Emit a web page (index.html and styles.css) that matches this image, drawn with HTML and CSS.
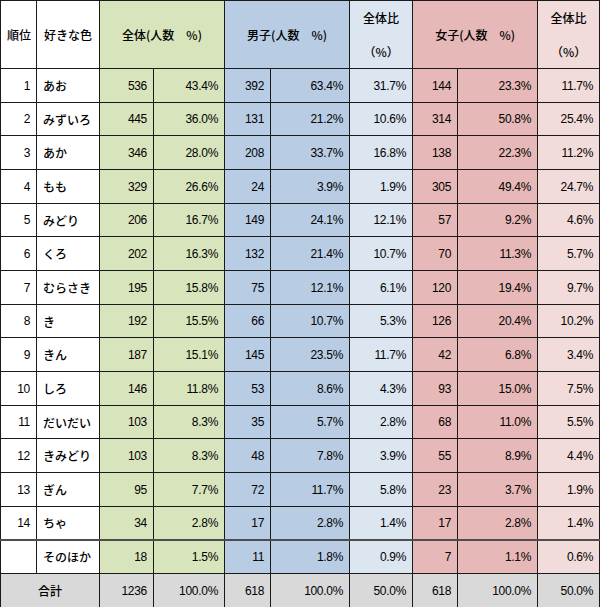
FILE: index.html
```html
<!DOCTYPE html>
<html lang="ja">
<head>
<meta charset="utf-8">
<title>好きな色</title>
<link rel="stylesheet" href="styles.css">
</head>
<body>
<table class="tbl">
  <colgroup>
    <col class="c-rank"><col class="c-name">
    <col class="c-n1"><col class="c-p1">
    <col class="c-n2"><col class="c-p2"><col class="c-r2">
    <col class="c-n3"><col class="c-p3"><col class="c-r3">
  </colgroup>
  <thead>
    <tr class="head">
      <th class="w">順位</th>
      <th class="w">好きな色</th>
      <th class="g" colspan="2">全体(人数　%)</th>
      <th class="b" colspan="2">男子(人数　%)</th>
      <th class="lb"><span class="l1">全体比</span><span class="l2">（%）</span></th>
      <th class="p" colspan="2">女子(人数　%)</th>
      <th class="lp"><span class="l1">全体比</span><span class="l2">（%）</span></th>
    </tr>
  </thead>
  <tbody>
    <tr class="r34"><td class="w num">1</td><td class="w name">あお</td><td class="g num">536</td><td class="g num">43.4%</td><td class="b num">392</td><td class="b num">63.4%</td><td class="lb num">31.7%</td><td class="p num">144</td><td class="p num">23.3%</td><td class="lp num">11.7%</td></tr>
    <tr class="r33"><td class="w num">2</td><td class="w name">みずいろ</td><td class="g num">445</td><td class="g num">36.0%</td><td class="b num">131</td><td class="b num">21.2%</td><td class="lb num">10.6%</td><td class="p num">314</td><td class="p num">50.8%</td><td class="lp num">25.4%</td></tr>
    <tr class="r34"><td class="w num">3</td><td class="w name">あか</td><td class="g num">346</td><td class="g num">28.0%</td><td class="b num">208</td><td class="b num">33.7%</td><td class="lb num">16.8%</td><td class="p num">138</td><td class="p num">22.3%</td><td class="lp num">11.2%</td></tr>
    <tr class="r34"><td class="w num">4</td><td class="w name">もも</td><td class="g num">329</td><td class="g num">26.6%</td><td class="b num">24</td><td class="b num">3.9%</td><td class="lb num">1.9%</td><td class="p num">305</td><td class="p num">49.4%</td><td class="lp num">24.7%</td></tr>
    <tr class="r33"><td class="w num">5</td><td class="w name">みどり</td><td class="g num">206</td><td class="g num">16.7%</td><td class="b num">149</td><td class="b num">24.1%</td><td class="lb num">12.1%</td><td class="p num">57</td><td class="p num">9.2%</td><td class="lp num">4.6%</td></tr>
    <tr class="r34"><td class="w num">6</td><td class="w name">くろ</td><td class="g num">202</td><td class="g num">16.3%</td><td class="b num">132</td><td class="b num">21.4%</td><td class="lb num">10.7%</td><td class="p num">70</td><td class="p num">11.3%</td><td class="lp num">5.7%</td></tr>
    <tr class="r34"><td class="w num">7</td><td class="w name">むらさき</td><td class="g num">195</td><td class="g num">15.8%</td><td class="b num">75</td><td class="b num">12.1%</td><td class="lb num">6.1%</td><td class="p num">120</td><td class="p num">19.4%</td><td class="lp num">9.7%</td></tr>
    <tr class="r33"><td class="w num">8</td><td class="w name">き</td><td class="g num">192</td><td class="g num">15.5%</td><td class="b num">66</td><td class="b num">10.7%</td><td class="lb num">5.3%</td><td class="p num">126</td><td class="p num">20.4%</td><td class="lp num">10.2%</td></tr>
    <tr class="r34"><td class="w num">9</td><td class="w name">きん</td><td class="g num">187</td><td class="g num">15.1%</td><td class="b num">145</td><td class="b num">23.5%</td><td class="lb num">11.7%</td><td class="p num">42</td><td class="p num">6.8%</td><td class="lp num">3.4%</td></tr>
    <tr class="r34"><td class="w num">10</td><td class="w name">しろ</td><td class="g num">146</td><td class="g num">11.8%</td><td class="b num">53</td><td class="b num">8.6%</td><td class="lb num">4.3%</td><td class="p num">93</td><td class="p num">15.0%</td><td class="lp num">7.5%</td></tr>
    <tr class="r33"><td class="w num">11</td><td class="w name">だいだい</td><td class="g num">103</td><td class="g num">8.3%</td><td class="b num">35</td><td class="b num">5.7%</td><td class="lb num">2.8%</td><td class="p num">68</td><td class="p num">11.0%</td><td class="lp num">5.5%</td></tr>
    <tr class="r34"><td class="w num">12</td><td class="w name">きみどり</td><td class="g num">103</td><td class="g num">8.3%</td><td class="b num">48</td><td class="b num">7.8%</td><td class="lb num">3.9%</td><td class="p num">55</td><td class="p num">8.9%</td><td class="lp num">4.4%</td></tr>
    <tr class="r34"><td class="w num">13</td><td class="w name">ぎん</td><td class="g num">95</td><td class="g num">7.7%</td><td class="b num">72</td><td class="b num">11.7%</td><td class="lb num">5.8%</td><td class="p num">23</td><td class="p num">3.7%</td><td class="lp num">1.9%</td></tr>
    <tr class="r33"><td class="w num">14</td><td class="w name">ちゃ</td><td class="g num">34</td><td class="g num">2.8%</td><td class="b num">17</td><td class="b num">2.8%</td><td class="lb num">1.4%</td><td class="p num">17</td><td class="p num">2.8%</td><td class="lp num">1.4%</td></tr>
    <tr class="r34 other"><td class="w num"></td><td class="w name">そのほか</td><td class="g num">18</td><td class="g num">1.5%</td><td class="b num">11</td><td class="b num">1.8%</td><td class="lb num">0.9%</td><td class="p num">7</td><td class="p num">1.1%</td><td class="lp num">0.6%</td></tr>
  </tbody>
  <tfoot>
    <tr class="total"><td class="t-label" colspan="2">合計</td><td class="num">1236</td><td class="num">100.0%</td><td class="num">618</td><td class="num">100.0%</td><td class="num">50.0%</td><td class="num">618</td><td class="num">100.0%</td><td class="num">50.0%</td></tr>
  </tfoot>
</table>
</body>
</html>
```

FILE: styles.css
```css
html, body {
  margin: 0;
  padding: 0;
  background: #ffffff;
}

.tbl {
  border-collapse: collapse;
  table-layout: fixed;
  width: 599px;
  font-family: "Liberation Sans", "Noto Sans CJK JP", sans-serif;
  font-size: 12px;
  color: #000000;
}

.c-rank { width: 36px; }
.c-name { width: 63px; }
.c-n1 { width: 54px; }
.c-p1 { width: 71px; }
.c-n2 { width: 46px; }
.c-p2 { width: 79px; }
.c-r2 { width: 63px; }
.c-n3 { width: 45px; }
.c-p3 { width: 80px; }
.c-r3 { width: 62px; }

.tbl th,
.tbl td {
  border: 1px solid #1a1a1a;
  padding: 0 6px;
  overflow: hidden;
  white-space: nowrap;
}

.tbl th {
  font-weight: 500;
  text-align: center;
  font-family: "Noto Sans CJK JP", sans-serif;
  font-size: 12px;
}

.head { height: 68px; }
.r34 { height: 34px; }
.r33 { height: 33px; }
.total { height: 34px; }

.l1, .l2 {
  display: block;
  line-height: 18px;
}
.l1 { margin-bottom: 16px; }

.w { background: #ffffff; }
.g { background: #d8e4bc; }
.b { background: #b8cce4; }
.lb { background: #dce6f1; }
.p { background: #e6b8b7; }
.lp { background: #f2dcdb; }

.num {
  text-align: right;
  letter-spacing: -0.3px;
}

.name {
  text-align: left;
  font-family: "Noto Sans CJK JP", sans-serif;
  font-weight: 500;
}

.other td {
  border-top: 2px solid #4d4d4d;
}

.total td {
  background: #d9d9d9;
}

.t-label {
  text-align: center;
  font-family: "Noto Sans CJK JP", sans-serif;
  font-weight: 500;
}
```
